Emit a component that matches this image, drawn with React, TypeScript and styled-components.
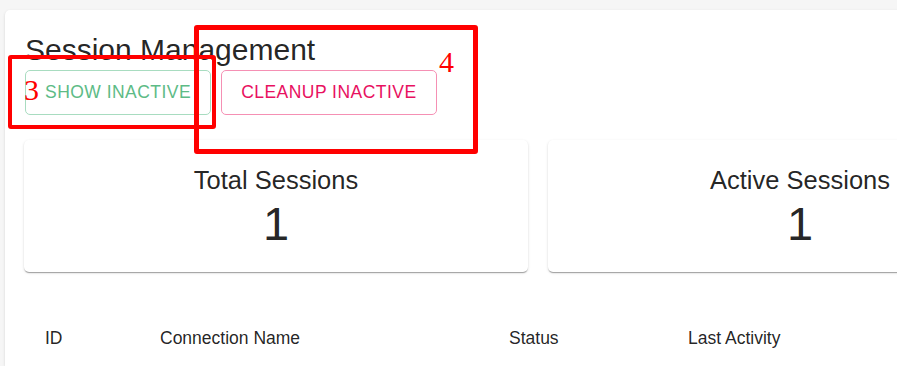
import React from "react";
import styled, { createGlobalStyle } from "styled-components";

const GlobalStyle = createGlobalStyle`
    html, body {
        margin: 0;
        padding: 0;
        background-color: #f6f6f6;
        font-family: "Liberation Sans", Arial, sans-serif;
        overflow: hidden;
    }
`

const Page = styled.div`
    position: relative;
    padding: 10px 0 0 5px;
    height: 356px;
`
const Panel = styled.div`
    box-sizing: border-box;
    background-color: #ffffff;
    border-radius: 5px 0 0 0;
    box-shadow: 0px 1px 3px rgba(0, 0, 0, 0.12), 0px 1px 1px rgba(0, 0, 0, 0.06);
    padding: 20px 0 0 20px;
    width: 1400px;
    height: 356px;
    overflow: hidden;
    color: rgba(0, 0, 0, 0.87);
`
const Title = styled.h1`
    margin: 0;
    font-size: 30px;
    line-height: 40px;
    font-weight: 400;
`
const Toolbar = styled.div`
    display: flex;
    gap: 10px;
    margin-bottom: 25px;
`
const OutlineButton = styled.button<{ $color: string; $border: string }>`
    height: 45px;
    padding: 0 19px;
    background: transparent;
    border: 1px solid ${p => p.$border};
    border-radius: 5px;
    color: ${p => p.$color};
    font-family: "Liberation Sans", Arial, sans-serif;
    font-size: 17.5px;
    letter-spacing: 0.47px;
    text-transform: uppercase;
    cursor: pointer;
`
const CardRow = styled.div`
    display: flex;
    gap: 20px;
    margin-left: -1px;
`
const Card = styled.div`
    width: 504px;
    box-sizing: border-box;
    padding: 20px 20px 24px;
    border-radius: 5px;
    background: #fff;
    text-align: center;
    box-shadow: 0px 2px 1px -1px rgba(0, 0, 0, 0.2), 0px 1px 1px 0px rgba(0, 0, 0, 0.14), 0px 1px 3px 0px rgba(0, 0, 0, 0.12);
`
const CardTitle = styled.div`
    font-size: 25.5px;
    line-height: 40px;
`
const CardValue = styled.div`
    font-size: 47px;
    line-height: 48px;
`
const HeaderRow = styled.div`
    display: grid;
    grid-template-columns: 115px 349px 179px 300px;
    margin-top: 31px;
`
const HeadCell = styled.div`
    padding: 20px;
    font-size: 17.5px;
    line-height: 30px;
`
const Mark = styled.div<{ $w: number }>`
    position: absolute;
    border: ${p => p.$w}px solid #ff0000;
    border-radius: 3px;
    box-sizing: border-box;
    pointer-events: none;
`
const MarkLabel = styled.span`
    position: absolute;
    font-family: "Liberation Serif", "Times New Roman", serif;
    font-size: 30px;
    line-height: 30px;
    color: #ff0000;
`

const App = () => {
    return (
        <Page>
            <GlobalStyle />
            <Panel>
                <Title>Session Management</Title>
                <Toolbar>
                    <OutlineButton $color="#5dbb86" $border="#a8dcc0">Show Inactive</OutlineButton>
                    <OutlineButton $color="#e8115f" $border="#f590b4">Cleanup Inactive</OutlineButton>
                </Toolbar>
                <CardRow>
                    <Card>
                        <CardTitle>Total Sessions</CardTitle>
                        <CardValue>1</CardValue>
                    </Card>
                    <Card>
                        <CardTitle>Active Sessions</CardTitle>
                        <CardValue>1</CardValue>
                    </Card>
                </CardRow>
                <HeaderRow>
                    <HeadCell>ID</HeadCell>
                    <HeadCell>Connection Name</HeadCell>
                    <HeadCell>Status</HeadCell>
                    <HeadCell>Last Activity</HeadCell>
                </HeaderRow>
            </Panel>

            <Mark $w={4} style={{ left: 8, top: 55, width: 208, height: 74 }} />
            <Mark $w={5} style={{ left: 194, top: 25, width: 284, height: 129 }} />
            <MarkLabel style={{ left: 24, top: 75 }}>3</MarkLabel>
            <MarkLabel style={{ left: 439, top: 47 }}>4</MarkLabel>
        </Page>
    )
}

export default App
